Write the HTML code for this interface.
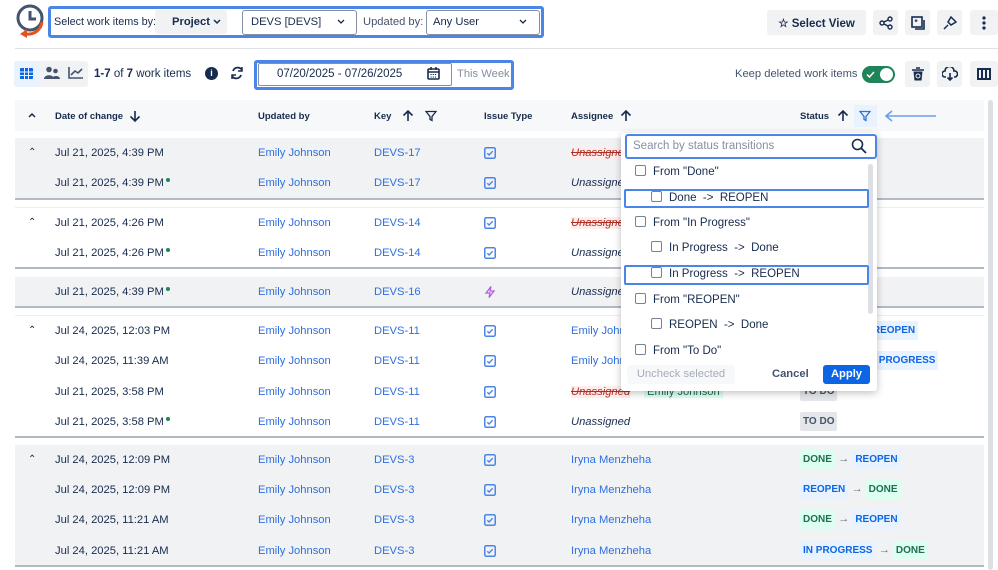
<!DOCTYPE html>
<html><head><meta charset="utf-8"><style>
*{box-sizing:border-box;margin:0;padding:0}
body{width:998px;height:569px;overflow:hidden;background:#fff;font-family:"Liberation Sans",sans-serif;font-size:11.2px;color:#172b4d;position:relative}
.a{position:absolute;white-space:nowrap}
.hl{border:3px solid #4c85e8;border-radius:3px}
.btn{background:#f1f2f4;border-radius:3px;display:flex;align-items:center;justify-content:center}
.grp{position:absolute;left:15px;width:969px;border-bottom:2px solid #b3b9c4}
.g{background:#f1f2f4}
.row{position:absolute;left:0;width:100%;height:30px}
.row span{position:absolute;top:9px;white-space:nowrap}
.lnk{color:#2f6fe0}
.cb{width:12px;height:12px;position:absolute;top:9px;left:469px}
.dot{display:inline-block;width:4px;height:4px;background:#1f845a;border-radius:50%;vertical-align:top;margin-left:2px;margin-top:1px}
.tag{font-size:10px;font-weight:bold;padding:4px 3px;border-radius:2px}
.dn{background:#dcfff1;color:#216e4e}.rp{background:#e9f2ff;color:#0c66e4}.td{background:#e4e6ea;color:#44546f}
.car{font-size:10px;left:13px}
.pop{position:absolute;left:621px;top:133px;width:256px;height:258px;background:#fff;box-shadow:0 2px 8px rgba(0,0,0,.25);border-radius:3px}
.it{position:absolute;font-size:11.5px;color:#172b4d;white-space:nowrap}
.it i{display:inline-block;width:11px;height:11px;border:1.5px solid #758195;border-radius:2px;vertical-align:-1px;margin-right:7px}
.hd{font-size:9.5px;font-weight:bold}
.ar{color:#626f86;font-weight:bold}
</style></head><body>
<svg width="0" height="0" style="position:absolute"><defs><symbol id="ck" viewBox="0 0 12 12"><rect x="0.75" y="0.75" width="10.5" height="10.5" rx="1.5" fill="none" stroke="#4c85e8" stroke-width="1.5"/><path d="M3.3 6.2l1.8 1.8 3.6-3.8" fill="none" stroke="#4c85e8" stroke-width="1.4"/></symbol></defs></svg>
<svg class="a" style="left:14px;top:3px" width="34" height="40" viewBox="0 0 34 40"><circle cx="16" cy="15" r="12" fill="none" stroke="#44546f" stroke-width="3"/><path d="M16 8v8h6" stroke="#44546f" stroke-width="3" fill="none"/><path d="M28 19c-1 8-8 13-16 12" stroke="#e2541f" stroke-width="3" fill="none"/><path d="M6 31l7-5v9z" fill="#e2541f"/></svg>
<div class="a hl" style="left:48px;top:6px;width:496px;height:32px"></div>
<span class="a" style="left:54px;top:16px;font-size:10.8px">Select work items by:</span>
<div class="a" style="left:155px;top:10px;width:72px;height:24px;background:#f1f2f4;border-radius:3px"></div>
<span class="a" style="left:172px;top:16px;font-weight:bold">Project</span>
<svg class="a" style="left:213px;top:19px" width="8" height="6"><path d="M1 1l3 3 3-3" fill="none" stroke="#172b4d" stroke-width="1.5"/></svg>
<div class="a" style="left:242px;top:10px;width:115px;height:25px;border:1px solid #8590a2;border-radius:3px"></div>
<span class="a" style="left:251px;top:16px">DEVS [DEVS]</span>
<svg class="a" style="left:337px;top:19px" width="8" height="6"><path d="M1 1l3 3 3-3" fill="none" stroke="#172b4d" stroke-width="1.3"/></svg>
<span class="a" style="left:363px;top:16px;color:#44546f">Updated by:</span>
<div class="a" style="left:426px;top:10px;width:114px;height:25px;border:1px solid #8590a2;border-radius:3px"></div>
<span class="a" style="left:433px;top:16px">Any User</span>
<svg class="a" style="left:519px;top:19px" width="8" height="6"><path d="M1 1l3 3 3-3" fill="none" stroke="#172b4d" stroke-width="1.3"/></svg>
<div class="a btn" style="left:767px;top:10px;width:99px;height:25px;font-weight:bold;font-size:11.5px">☆&nbsp;Select View</div>
<div class="a btn" style="left:873px;top:10px;width:25px;height:25px"><svg width="14" height="14"><circle cx="3" cy="7" r="2" fill="none" stroke="#172b4d" stroke-width="1.4"/><circle cx="11" cy="3" r="2" fill="none" stroke="#172b4d" stroke-width="1.4"/><circle cx="11" cy="11" r="2" fill="none" stroke="#172b4d" stroke-width="1.4"/><path d="M5 6l4-2M5 8l4 2" stroke="#172b4d" stroke-width="1.4"/></svg></div>
<div class="a btn" style="left:905px;top:10px;width:25px;height:25px"><svg width="14" height="14"><rect x="1" y="1" width="10" height="10" fill="none" stroke="#172b4d" stroke-width="1.6"/><path d="M13 4v9H4" fill="none" stroke="#172b4d" stroke-width="1.6"/><text x="3.5" y="9" font-size="8" font-weight="bold" fill="#172b4d">*</text></svg></div>
<div class="a btn" style="left:937px;top:10px;width:25px;height:25px"><svg width="14" height="14"><path d="M8 1l5 5-5 3-3-3zM5 9l-4 4" fill="none" stroke="#172b4d" stroke-width="1.5"/></svg></div>
<div class="a btn" style="left:970px;top:10px;width:28px;height:25px"><svg width="4" height="14"><circle cx="2" cy="2" r="1.6" fill="#172b4d"/><circle cx="2" cy="7" r="1.6" fill="#172b4d"/><circle cx="2" cy="12" r="1.6" fill="#172b4d"/></svg></div>
<div class="a" style="left:15px;top:48px;width:983px;height:1px;background:#dfe1e6"></div>
<div class="a" style="left:14px;top:61px;width:74px;height:26px;background:#f1f2f4;border-radius:3px"></div>
<div class="a" style="left:14px;top:61px;width:25px;height:26px;background:#e9f2ff;border-radius:3px"></div>
<svg class="a" style="left:20px;top:68px" width="13" height="11"><rect width="13" height="11" rx="1" fill="#0c66e4"/><path d="M0 4h13M0 7.5h13M4.5 0v11M8.5 0v11" stroke="#e9f2ff"/></svg>
<svg class="a" style="left:44px;top:66px" width="16" height="14"><circle cx="5" cy="3.5" r="2.8" fill="#44546f"/><circle cx="11.5" cy="5" r="2.3" fill="#44546f"/><path d="M0 13c0-5 10-5 10 0zM8 13c0-4 8-4 8 0z" fill="#44546f"/></svg>
<svg class="a" style="left:68px;top:66px" width="16" height="13"><path d="M1 1v11h14" fill="none" stroke="#44546f" stroke-width="1.6"/><path d="M3 9l4-4 3 2 4-4" fill="none" stroke="#44546f" stroke-width="1.6"/></svg>
<span class="a" style="left:94px;top:68px;font-size:11.5px"><b>1-7</b> of <b>7</b> work items</span>
<div class="a" style="left:205px;top:67px;width:13px;height:13px;border-radius:50%;background:#172b4d;color:#fff;font-size:9px;text-align:center;line-height:13px;font-weight:bold">i</div>
<svg class="a" style="left:230px;top:66px" width="14" height="14"><path d="M3 5a5 5 0 0 1 9-1M11 9a5 5 0 0 1-9 1" fill="none" stroke="#172b4d" stroke-width="1.8"/><path d="M12 1v4H8M2 13V9h4" fill="none" stroke="#172b4d" stroke-width="1.5"/></svg>
<div class="a hl" style="left:254px;top:60px;width:260px;height:30px"></div>
<div class="a" style="left:258px;top:63px;width:194px;height:23px;border:1px solid #8590a2;border-radius:2px"></div>
<span class="a" style="left:277px;top:68px;font-size:11.5px">07/20/2025 - 07/26/2025</span>
<svg class="a" style="left:427px;top:67px" width="13" height="13"><rect x="1" y="2" width="11" height="10" rx="1" fill="none" stroke="#172b4d" stroke-width="1.6"/><path d="M1 5h11M4 0v3M9 0v3" stroke="#172b4d" stroke-width="1.5"/><path d="M3.5 7.5h6M3.5 10h6" stroke="#172b4d" stroke-dasharray="1.2 1"/></svg>
<span class="a" style="left:457px;top:68px;color:#8590a2">This Week</span>
<span class="a" style="left:735px;top:68px;color:#44546f">Keep deleted work items</span>
<div class="a" style="left:862px;top:66px;width:33px;height:17px;border-radius:9px;background:#1f845a"></div>
<div class="a" style="left:880px;top:68px;width:13px;height:13px;border-radius:50%;background:#fff"></div>
<svg class="a" style="left:866px;top:71px" width="9" height="7"><path d="M1 3.5l2.5 2.5 4.5-5" fill="none" stroke="#fff" stroke-width="1.5"/></svg>
<div class="a btn" style="left:905px;top:61px;width:25px;height:26px"><svg width="12" height="14"><path d="M0 3h12M4 1h4" stroke="#172b4d" stroke-width="1.6"/><path d="M1.5 4.5h9l-1 9h-7z" fill="#172b4d"/><circle cx="6" cy="9" r="2" fill="none" stroke="#f1f2f4"/></svg></div>
<div class="a btn" style="left:937px;top:61px;width:25px;height:26px"><svg width="16" height="14"><path d="M4 10H3a3 3 0 0 1 0-6 4.5 4.5 0 0 1 9 0 3 3 0 0 1 1 6h-1" fill="none" stroke="#172b4d" stroke-width="1.6"/><path d="M8 6v7M5.5 10.5L8 13l2.5-2.5" fill="none" stroke="#172b4d" stroke-width="1.6"/></svg></div>
<div class="a btn" style="left:970px;top:61px;width:28px;height:26px"><svg width="14" height="12"><rect x="1" y="1" width="12" height="10" fill="none" stroke="#172b4d" stroke-width="2"/><path d="M5 1v10M9 1v10" stroke="#172b4d" stroke-width="2"/></svg></div>
<div class="a" style="left:15px;top:100px;width:969px;height:31px;background:#f7f8f9"></div>
<div class="a" style="left:988px;top:100px;width:5px;height:470px;background:#dcdfe4;border-radius:3px"></div>
<svg class="a" style="left:28px;top:112px" width="8" height="6"><path d="M1 5l3-3 3 3" fill="none" stroke="#172b4d" stroke-width="1.5"/></svg>
<span class="a hd" style="left:55px;top:111px">Date of change</span>
<span class="a hd" style="left:258px;top:111px">Updated by</span>
<span class="a hd" style="left:374px;top:111px">Key</span>
<span class="a hd" style="left:484px;top:111px">Issue Type</span>
<span class="a hd" style="left:571px;top:111px">Assignee</span>
<span class="a hd" style="left:800px;top:111px">Status</span>
<svg width="0" height="0" style="position:absolute"><defs><symbol id="dn" viewBox="0 0 12 12"><path d="M6 1v10M1.5 6.5L6 11l4.5-4.5" fill="none" stroke="#172b4d" stroke-width="1.6"/></symbol><symbol id="up" viewBox="0 0 12 12"><path d="M6 11V1M1.5 5.5L6 1l4.5 4.5" fill="none" stroke="#172b4d" stroke-width="1.6"/></symbol><symbol id="fl" viewBox="0 0 12 12"><path d="M1 1.5h10L7 6.5v4l-2-1v-3z" fill="none" stroke="currentColor" stroke-width="1.3"/></symbol></defs></svg>
<svg class="a" style="left:129px;top:110px" width="12" height="12"><use href="#dn"/></svg>
<svg class="a" style="left:402px;top:110px" width="12" height="12"><use href="#up"/></svg>
<svg class="a" style="left:425px;top:110px;color:#172b4d" width="12" height="12"><use href="#fl"/></svg>
<svg class="a" style="left:620px;top:110px" width="12" height="12"><use href="#up"/></svg>
<svg class="a" style="left:837px;top:110px" width="12" height="12"><use href="#up"/></svg>
<div class="a" style="left:854px;top:105px;width:23px;height:22px;background:#e9f2ff"></div>
<svg class="a" style="left:859px;top:110px;color:#2f6fe0" width="12" height="12"><use href="#fl"/></svg>
<svg class="a" style="left:884px;top:110px" width="54" height="12"><path d="M2 6h50M8 1L2 6l6 5" fill="none" stroke="#6c9cf0" stroke-width="1.6"/></svg>
<div class="grp g" style="top:138px;height:62px">
<div class="row" style="top:0"><span class="car">⌃</span><span style="left:40px">Jul 21, 2025, 4:39 PM</span><span class="lnk" style="left:243px">Emily Johnson</span><span class="lnk" style="left:359px">DEVS-17</span><svg class="cb"><use href="#ck"/></svg><span style="left:556px;color:#ae2e24;text-decoration:line-through;font-style:italic;background:#ffeceb">Unassigned</span></div>
<div class="row" style="top:30px"><span style="left:40px">Jul 21, 2025, 4:39 PM<b class="dot"></b></span><span class="lnk" style="left:243px">Emily Johnson</span><span class="lnk" style="left:359px">DEVS-17</span><svg class="cb"><use href="#ck"/></svg><span style="left:556px;font-style:italic">Unassigned</span></div>
</div>
<div class="grp" style="top:207px;height:62px;border-top:1px solid #eee">
<div class="row" style="top:0"><span class="car">⌃</span><span style="left:40px">Jul 21, 2025, 4:26 PM</span><span class="lnk" style="left:243px">Emily Johnson</span><span class="lnk" style="left:359px">DEVS-14</span><svg class="cb"><use href="#ck"/></svg><span style="left:556px;color:#ae2e24;text-decoration:line-through;font-style:italic;background:#ffeceb">Unassigned</span></div>
<div class="row" style="top:30px"><span style="left:40px">Jul 21, 2025, 4:26 PM<b class="dot"></b></span><span class="lnk" style="left:243px">Emily Johnson</span><span class="lnk" style="left:359px">DEVS-14</span><svg class="cb"><use href="#ck"/></svg><span style="left:556px;font-style:italic">Unassigned</span></div>
</div>
<div class="grp g" style="top:277px;height:31px">
<div class="row" style="top:0"><span style="left:40px">Jul 21, 2025, 4:39 PM<b class="dot"></b></span><span class="lnk" style="left:243px">Emily Johnson</span><span class="lnk" style="left:359px">DEVS-16</span><svg class="cb" viewBox="0 0 12 12"><path d="M7 0.5L2 7h4l-1 4.5L10 5H6z" fill="none" stroke="#af59e1" stroke-width="1.2"/></svg><span style="left:556px;font-style:italic">Unassigned</span></div>
</div>
<div class="grp" style="top:315px;height:123px;border-top:1px solid #eee">
<div class="row" style="top:0"><span class="car">⌃</span><span style="left:40px">Jul 24, 2025, 12:03 PM</span><span class="lnk" style="left:243px">Emily Johnson</span><span class="lnk" style="left:359px">DEVS-11</span><svg class="cb"><use href="#ck"/></svg><span class="lnk" style="left:556px">Emily Johnson</span><span style="left:800px;top:8px"><b class="tag td">TO DO</b> <span class="ar" style="position:static">→</span> <b class="tag rp">REOPEN</b></span></div>
<div class="row" style="top:30px"><span style="left:40px">Jul 24, 2025, 11:39 AM</span><span class="lnk" style="left:243px">Emily Johnson</span><span class="lnk" style="left:359px">DEVS-11</span><svg class="cb"><use href="#ck"/></svg><span class="lnk" style="left:556px">Emily Johnson</span><span style="left:848px;top:8px"><b class="tag rp">IN PROGRESS</b></span></div>
<div class="row" style="top:61px"><span style="left:40px">Jul 21, 2025, 3:58 PM</span><span class="lnk" style="left:243px">Emily Johnson</span><span class="lnk" style="left:359px">DEVS-11</span><svg class="cb"><use href="#ck"/></svg><span style="left:556px;font-style:italic;color:#ae2e24;text-decoration:line-through;background:#ffeceb">Unassigned</span><span style="left:629px;color:#216e4e;background:#dcfff1;padding:0 3px">Emily Johnson</span><span style="left:785px;top:8px"><b class="tag td">TO DO</b></span></div>
<div class="row" style="top:91px"><span style="left:40px">Jul 21, 2025, 3:58 PM<b class="dot"></b></span><span class="lnk" style="left:243px">Emily Johnson</span><span class="lnk" style="left:359px">DEVS-11</span><svg class="cb"><use href="#ck"/></svg><span style="left:556px;font-style:italic">Unassigned</span><span style="left:785px;top:8px"><b class="tag td">TO DO</b></span></div>
</div>
<div class="grp g" style="top:445px;height:122px">
<div class="row" style="top:0"><span class="car">⌃</span><span style="left:40px">Jul 24, 2025, 12:09 PM</span><span class="lnk" style="left:243px">Emily Johnson</span><span class="lnk" style="left:359px">DEVS-3</span><svg class="cb"><use href="#ck"/></svg><span class="lnk" style="left:556px">Iryna Menzheha</span><span style="left:785px;top:8px"><b class="tag dn">DONE</b> <span class="ar" style="position:static">→</span> <b class="tag rp">REOPEN</b></span></div>
<div class="row" style="top:30px"><span style="left:40px">Jul 24, 2025, 12:09 PM</span><span class="lnk" style="left:243px">Emily Johnson</span><span class="lnk" style="left:359px">DEVS-3</span><svg class="cb"><use href="#ck"/></svg><span class="lnk" style="left:556px">Iryna Menzheha</span><span style="left:785px;top:8px"><b class="tag rp">REOPEN</b> <span class="ar" style="position:static">→</span> <b class="tag dn">DONE</b></span></div>
<div class="row" style="top:60px"><span style="left:40px">Jul 24, 2025, 11:21 AM</span><span class="lnk" style="left:243px">Emily Johnson</span><span class="lnk" style="left:359px">DEVS-3</span><svg class="cb"><use href="#ck"/></svg><span class="lnk" style="left:556px">Iryna Menzheha</span><span style="left:785px;top:8px"><b class="tag dn">DONE</b> <span class="ar" style="position:static">→</span> <b class="tag rp">REOPEN</b></span></div>
<div class="row" style="top:91px"><span style="left:40px">Jul 24, 2025, 11:21 AM</span><span class="lnk" style="left:243px">Emily Johnson</span><span class="lnk" style="left:359px">DEVS-3</span><svg class="cb"><use href="#ck"/></svg><span class="lnk" style="left:556px">Iryna Menzheha</span><span style="left:785px;top:8px"><b class="tag rp">IN PROGRESS</b> <span class="ar" style="position:static">→</span> <b class="tag dn">DONE</b></span></div>
</div>
<div class="pop">
<div class="a" style="left:4px;top:1px;width:252px;height:25px;border:2px solid #4c85e8;border-radius:3px"></div>
<span class="a" style="left:12px;top:7px;color:#8590a2;font-size:11.5px">Search by status transitions</span>
<svg class="a" style="left:230px;top:5px" width="16" height="16"><circle cx="6.5" cy="6.5" r="5" fill="none" stroke="#172b4d" stroke-width="1.6"/><path d="M10 10l5 5" stroke="#172b4d" stroke-width="1.8"/></svg>
<div class="a" style="left:247px;top:31px;width:5px;height:150px;background:#dcdfe4;border-radius:3px"></div>
<div class="it" style="left:14px;top:32px"><i></i>From "Done"</div>
<div class="a" style="left:3px;top:56px;width:245px;height:19px;border:2px solid #4c85e8;border-radius:2px"></div>
<div class="it" style="left:30px;top:58px"><i></i>Done &nbsp;-&gt;&nbsp; REOPEN</div>
<div class="it" style="left:14px;top:83px"><i></i>From "In Progress"</div>
<div class="it" style="left:30px;top:108px"><i></i>In Progress &nbsp;-&gt;&nbsp; Done</div>
<div class="a" style="left:3px;top:132px;width:245px;height:20px;border:2px solid #4c85e8;border-radius:2px"></div>
<div class="it" style="left:30px;top:134px"><i></i>In Progress &nbsp;-&gt;&nbsp; REOPEN</div>
<div class="it" style="left:14px;top:160px"><i></i>From "REOPEN"</div>
<div class="it" style="left:30px;top:185px"><i></i>REOPEN &nbsp;-&gt;&nbsp; Done</div>
<div class="it" style="left:14px;top:211px"><i></i>From "To Do"</div>
<div class="a" style="left:6px;top:232px;width:108px;height:19px;background:#f7f8f9;border-radius:3px;color:#a5adba;text-align:center;line-height:19px">Uncheck selected</div>
<span class="a" style="left:151px;top:235px;font-weight:bold;color:#44546f">Cancel</span>
<div class="a" style="left:202px;top:232px;width:47px;height:19px;background:#0c66e4;border-radius:3px;color:#fff;font-weight:bold;text-align:center;line-height:19px">Apply</div>
</div>
</body></html>
